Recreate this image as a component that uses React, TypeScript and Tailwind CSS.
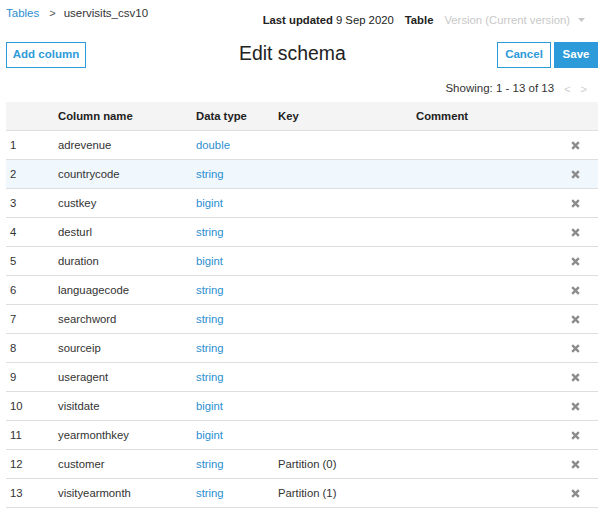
import React from "react";

const rows: [string, string, string][] = [
  ["adrevenue", "double", ""],
  ["countrycode", "string", ""],
  ["custkey", "bigint", ""],
  ["desturl", "string", ""],
  ["duration", "bigint", ""],
  ["languagecode", "string", ""],
  ["searchword", "string", ""],
  ["sourceip", "string", ""],
  ["useragent", "string", ""],
  ["visitdate", "bigint", ""],
  ["yearmonthkey", "bigint", ""],
  ["customer", "string", "Partition (0)"],
  ["visityearmonth", "string", "Partition (1)"],
];

function XIcon() {
  return (
    <svg width="9" height="9" viewBox="0 0 9 9">
      <path d="M1.2 1.2 L7.8 7.8 M7.8 1.2 L1.2 7.8" stroke="#8c8c8c" strokeWidth="2.4" strokeLinecap="butt" />
    </svg>
  );
}

export default function App() {
  const grid = "grid grid-cols-[52px_138px_82px_138px_1fr_42px] items-center";
  return (
    <div className="w-[609px] h-[515px] bg-white text-[11.3px] text-[#222] overflow-hidden" style={{ fontFamily: '"Liberation Sans", Arial, sans-serif' }}>
      <div className="pl-[6px] pr-[11px]">
        <div className="flex items-start justify-between h-[41px]">
          <div className="flex items-center pt-[5px] text-[11.5px]">
            <span className="text-[#2b8fd1]">Tables</span>
            <span className="ml-[10px] text-[#555] text-[11px]">&gt;</span>
            <span className="ml-[8px] text-[#333]">uservisits_csv10</span>
          </div>
          <div className="flex items-center pt-[12px] pr-[13px] text-[11.3px]">
            <span className="font-bold">Last updated</span>
            <span className="ml-[3px]">9 Sep 2020</span>
            <span className="ml-[11px] font-bold">Table</span>
            <span className="ml-[11px] text-[#c8c8c8]">Version (Current version)</span>
            <svg className="ml-[8px]" width="7" height="4" viewBox="0 0 7 4"><path d="M0 0 L7 0 L3.5 4 Z" fill="#c8c8c8" /></svg>
          </div>
        </div>
        <div className="flex items-center mt-[1px] h-[26px]">
          <button className="h-[26px] w-[80px] border border-[#2d9ad9] text-[#2d9ad9] font-bold text-[11.5px]">Add column</button>
          <div className="text-[19.4px] text-[#222] ml-[153px] -mt-[3px]">Edit schema</div>
          <div className="flex gap-[3px] ml-auto">
            <button className="h-[26px] w-[54px] border border-[#2d9ad9] text-[#2d9ad9] font-bold text-[11.5px]">Cancel</button>
            <button className="h-[26px] w-[44px] bg-[#2d9ad9] text-white font-bold text-[11.5px]">Save</button>
          </div>
        </div>
        <div className="flex items-center justify-end mt-[14px] h-[14px] pr-[11px]">
          <span className="text-[11.5px] text-[#333]">Showing: 1 - 13 of 13</span>
          <span className="ml-[10px] text-[#ccc] text-[11px]">&lt;</span>
          <span className="ml-[10px] text-[#ccc] text-[11px]">&gt;</span>
        </div>
        <div className="mt-[6px]">
          <div className={`${grid} h-[29px] bg-[#f4f4f4] border-b border-[#dedede] font-bold text-[#222]`}>
            <div />
            <div>Column name</div>
            <div>Data type</div>
            <div>Key</div>
            <div>Comment</div>
            <div />
          </div>
          {rows.map(([name, type, key], i) => (
            <div key={name} className={`${grid} h-[29px] border-b border-[#dedede] ${i === 1 ? "bg-[#f0f7fd]" : "bg-white"}`}>
              <div className="pl-[4px] text-[#333]">{i + 1}</div>
              <div className="text-[#333]">{name}</div>
              <div className="text-[#2b8fd1]">{type}</div>
              <div className="text-[#333]">{key}</div>
              <div />
              <div className="flex justify-start pl-[15px]"><XIcon /></div>
            </div>
          ))}
        </div>
      </div>
    </div>
  );
}
